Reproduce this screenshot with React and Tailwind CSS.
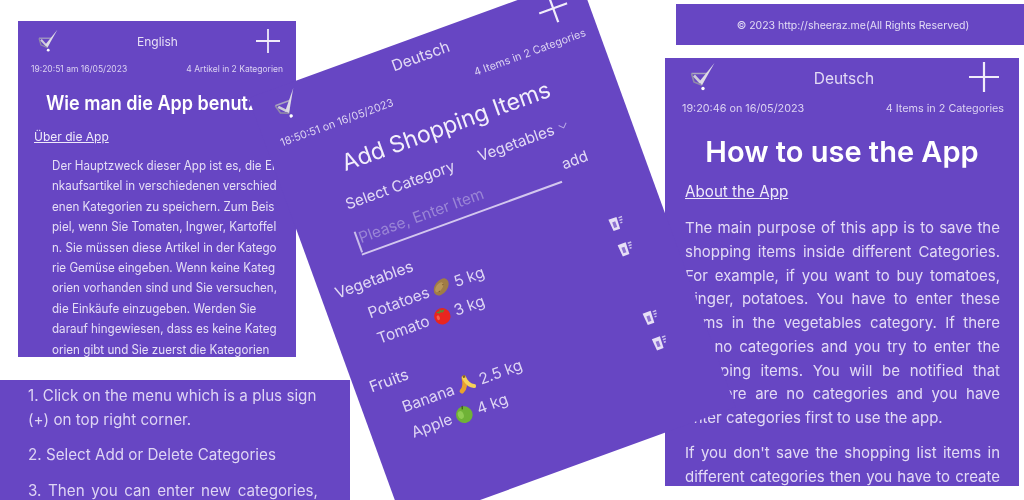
const PANEL = "absolute bg-[#6746c3] overflow-hidden";

function Check({ size = 30 }) {
  return (
    <svg width={size} height={size} viewBox="0 0 30 30" className="shrink-0">
      <path d="M2.5 11.5H18.5" stroke="#a9a4bf" strokeWidth="1.5" />
      <path d="M2.5 11.5L5 20L12.5 23L15.5 17" fill="none" stroke="#908aa8" strokeWidth="1.6" strokeLinejoin="round" />
      <path d="M5 13.5L11.5 20.5" stroke="#cfccd9" strokeWidth="2.6" />
      <path d="M10 20L25.5 1L13 23Z" fill="#dedbe6" />
      <circle cx="14" cy="26.5" r="1.7" fill="#ffffff" />
    </svg>
  );
}

function Plus({ size = 30 }) {
  return (
    <svg width={size} height={size} viewBox="0 0 30 30" className="shrink-0">
      <path d="M0 15H30M15 0V30" stroke="#f1edfa" strokeWidth="2.2" />
    </svg>
  );
}

function Trash() {
  return (
    <svg width="15" height="15" viewBox="0 0 14 14" className="shrink-0">
      <path d="M0.5 1.5H8.5L8 13H1.5Z" fill="#e6dff6" />
      <path d="M3 5H6V10.5H3Z" fill="#8d72d2" />
      <path d="M10 3H13.5M10 5.5H13M10 8H12" stroke="#cbbfec" strokeWidth="1.4" />
    </svg>
  );
}

function Potato() {
  return (
    <svg width="19" height="19" viewBox="0 0 20 20" className="shrink-0 -rotate-[35deg]">
      <ellipse cx="10" cy="10" rx="10" ry="6.6" fill="#a07c45" />
      <ellipse cx="8.5" cy="8.5" rx="6" ry="3.2" fill="#b89558" />
      <circle cx="5" cy="11" r=".7" fill="#7a5a2c" />
      <circle cx="13" cy="10" r=".7" fill="#7a5a2c" />
    </svg>
  );
}
function Tomato() {
  return (
    <svg width="19" height="19" viewBox="0 0 20 20" className="shrink-0">
      <circle cx="10" cy="11" r="8.6" fill="#e9251f" />
      <path d="M5 5 L9 5 L10 2.5 L11 5 L15 5 L12 7.5 L10 6.5 L8 7.5Z" fill="#5b8a34" />
      <ellipse cx="5.5" cy="11" rx="1.6" ry="2.6" fill="#f5604f" />
    </svg>
  );
}
function Banana() {
  return (
    <svg width="19" height="19" viewBox="0 0 20 20" className="shrink-0 rotate-[10deg]">
      <path d="M8 3C8.5 9 7 14 3.5 16.5" fill="none" stroke="#e9a12c" strokeWidth="5" strokeLinecap="round" />
      <path d="M8 3C10 9 13 12.5 17 13.5" fill="none" stroke="#f6d25a" strokeWidth="4.2" strokeLinecap="round" />
      <path d="M7 0.5H9.5V3H7Z" fill="#85621f" />
    </svg>
  );
}
function Apple() {
  return (
    <svg width="19" height="19" viewBox="0 0 20 20" className="shrink-0">
      <circle cx="10" cy="11" r="8.8" fill="#6fb236" />
      <ellipse cx="6.5" cy="10" rx="3" ry="4.2" fill="#8fcb52" />
      <path d="M10 5 L11 1.5" stroke="#3f5b1a" strokeWidth="1.4" />
    </svg>
  );
}

const rightBody = [
  "The main purpose of this app is to save the",
  "shopping items inside different Categories.",
  "For example, if you want to buy tomatoes,",
  "ginger, potatoes. You have to enter these",
  "items in the vegetables category. If there",
  "are no categories and you try to enter the",
  "shopping items. You will be notified that",
  "as there are no categories and you have",
];

const leftBody = [
  "Der Hauptzweck dieser App ist es, die Ei",
  "nkaufsartikel in verschiedenen verschied",
  "enen Kategorien zu speichern. Zum Beis",
  "piel, wenn Sie Tomaten, Ingwer, Kartoffel",
  "n. Sie müssen diese Artikel in der Katego",
  "rie Gemüse eingeben. Wenn keine Kateg",
  "orien vorhanden sind und Sie versuchen,",
  "die Einkäufe einzugeben. Werden Sie",
  "darauf hingewiesen, dass es keine Kateg",
  "orien gibt und Sie zuerst die Kategorien",
];

function Row({ name, icon, qty }) {
  return (
    <div className="flex items-center justify-between h-[27px] pl-[39px] pr-[41px]">
      <div className="flex items-center gap-[4px] text-[15.5px] text-[#ded5f4]">
        <span>{name}</span>
        {icon}
        <span>{qty}</span>
      </div>
      <Trash />
    </div>
  );
}

export default function App() {
  return (
    <div className="relative w-[1024px] h-[500px] overflow-hidden bg-white font-['Inter',sans-serif] blur-[0.35px]">
      {/* left: German how-to */}
      <section className={`${PANEL} left-[18px] top-[21px] w-[278px] h-[336px] text-[#e6dff6]`}>
        <header className="flex items-center justify-between h-[24px] mt-[8px] pl-[19px] pr-[16px]">
          <Check size={24} />
          <span className="text-[12px] ml-[-2px] mt-[1px]">English</span>
          <Plus size={24} />
        </header>
        <div className="flex justify-between px-[13px] mt-[10px] text-[8.5px] leading-[12px] text-[#dcd3f2]">
          <span>19:20:51 am 16/05/2023</span>
          <span>4 Artikel in 2 Kategorien</span>
        </div>
        <h1 className="mt-[15px] pl-[28px] text-[20px] leading-[26px] font-semibold text-white whitespace-nowrap origin-[28px_50%] scale-x-[0.9]">
          Wie man die App benutzt
        </h1>
        <h2 className="mt-[12px] pl-[16px] text-[12px] leading-[18px] underline text-[#efeafa]">Über die App</h2>
        <div className="mt-[10px] pl-[34px] text-[12.5px] leading-[20.4px] whitespace-nowrap origin-[34px_50%] scale-x-[0.93]">
          {leftBody.map((l) => (
            <div key={l}>{l}</div>
          ))}
        </div>
      </section>

      {/* bottom-left: steps */}
      <section className={`${PANEL} left-0 top-[380px] w-[350px] h-[120px] pl-[28px] pr-[32px] pt-[4px] text-[15.2px] leading-[23.5px] text-[#ded5f4]`}>
        <p>1. Click on the menu which is a plus sign</p>
        <p>(+) on top right corner.</p>
        <p className="mt-[12px]">2. Select Add or Delete Categories</p>
        <p className="mt-[12px] [text-align-last:justify]">3. Then you can enter new categories,</p>
      </section>

      {/* top-right: footer */}
      <section className={`${PANEL} left-[676px] top-[4px] w-[348px] h-[41px] flex items-center justify-center pl-[6px] pt-[3px] text-[10.5px] text-[#e3dcf5]`}>
        © 2023 http://sheeraz.me(All Rights Reserved)
      </section>

      {/* right: English how-to */}
      <section className={`${PANEL} left-[665px] top-[58px] w-[354px] h-[428px] text-[#e2daf5]`}>
        <header className="flex items-center justify-between h-[30px] mt-[4px] pl-[24px] pr-[20px]">
          <Check size={30} />
          <span className="text-[15.5px] mt-[3px]">Deutsch</span>
          <Plus size={30} />
        </header>
        <div className="flex justify-between px-[17px] pr-[15px] mt-[9px] text-[10.8px] leading-[16px] text-[#dcd3f2]">
          <span>19:20:46 on 16/05/2023</span>
          <span>4 Items in 2 Categories</span>
        </div>
        <h1 className="mt-[16px] text-center text-[29px] leading-[38px] font-semibold text-white">How to use the App</h1>
        <h2 className="mt-[11px] pl-[20px] text-[15.2px] leading-[20px] underline text-[#efeafa]">About the App</h2>
        <div className="mt-[14px] pl-[20px] pr-[19px] text-[15px] leading-[23.75px]">
          {rightBody.map((l) => (
            <div key={l} className="[text-align-last:justify]">{l}</div>
          ))}
          <div>enter categories first to use the app.</div>
          <div className="mt-[11px] [text-align-last:justify]">If you don't save the shopping list items in</div>
          <div className="[text-align-last:justify]">different categories then you have to create</div>
        </div>
      </section>

      {/* centre: rotated add-item screen */}
      <section className={`${PANEL} left-[315.5px] top-[23.5px] w-[352px] h-[457px] -rotate-[20deg] text-[#e2daf5]`}>
        <header className="flex items-center justify-between h-[30px] mt-[5px] px-[20px]">
          <Check size={30} />
          <span className="text-[15.5px]">Deutsch</span>
          <Plus size={30} />
        </header>
        <div className="flex justify-between pl-[15px] pr-[13px] mt-[11px] text-[10.8px] leading-[16px] text-[#dcd3f2]">
          <span>18:50:51 on 16/05/2023</span>
          <span>4 Items in 2 Categories</span>
        </div>
        <h1 className="mt-[15px] text-center text-[23px] leading-[34px] text-[#f3effb]">Add Shopping Items</h1>
        <div className="flex items-center mt-[12px] pl-[55px] h-[22px] text-[15.2px]">
          <span className="w-[137px]">Select Category</span>
          <span className="ml-[4px]">Vegetables</span>
          <svg width="10" height="6" viewBox="0 0 10 6" className="ml-[5px]">
            <path d="M1 1L5 5L9 1" fill="none" stroke="#b9a9e6" strokeWidth="1" />
          </svg>
        </div>
        <div className="flex items-center mt-[15px] pl-[53px] h-[27px]">
          <div className="w-[213px] h-[27px] border-b-2 border-[#d3c7ef] flex items-center">
            <span className="w-[2px] h-[22px] bg-[#c9bdea] mr-[1px]" />
            <span className="text-[15.5px] text-[#9a85d6] -mt-[5px]">Please, Enter Item</span>
          </div>
          <span className="ml-[6px] text-[15px] -mt-[6px]">add</span>
        </div>
        <div className="mt-[16px] pl-[15px] h-[22px] leading-[22px] text-[15.5px]">Vegetables</div>
        <div className="mt-[5px]">
          <Row name="Potatoes" icon={<Potato />} qty="5 kg" />
          <Row name="Tomato" icon={<Tomato />} qty="3 kg" />
        </div>
        <div className="mt-[19px] pl-[15px] h-[22px] leading-[22px] text-[15.5px]">Fruits</div>
        <div className="mt-[5px]">
          <Row name="Banana" icon={<Banana />} qty="2.5 kg" />
          <Row name="Apple" icon={<Apple />} qty="4 kg" />
        </div>
      </section>
    </div>
  );
}
